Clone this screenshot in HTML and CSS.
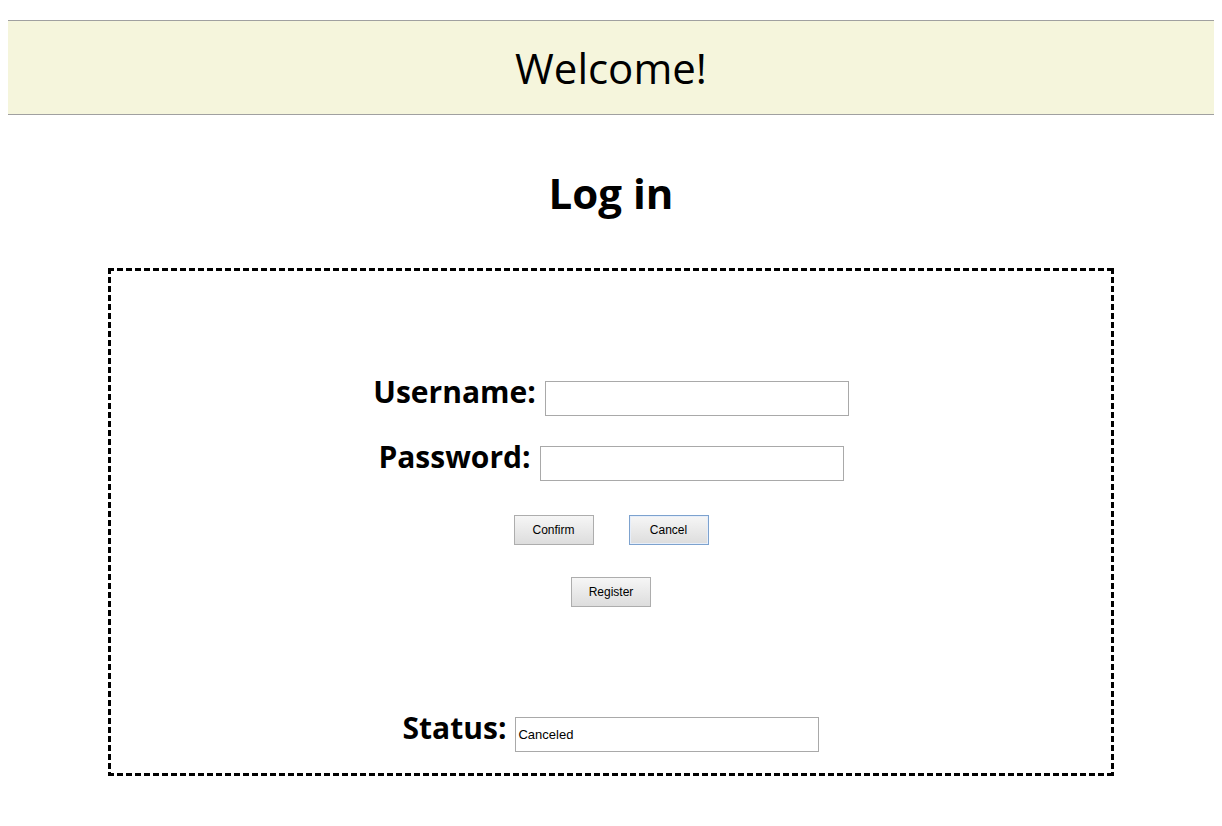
FILE: index.html
```html
<!DOCTYPE html>
<html lang="en">
<head>
<meta charset="utf-8">
<title>Log in</title>
<link rel="stylesheet" href="styles.css">
</head>
<body>
<header class="banner">Welcome!</header>
<h1 class="title">Log in</h1>
<section class="panel">
  <div class="field field-user">
    <label class="label" for="user">Username:</label>
    <input class="text-input" id="user" type="text">
  </div>
  <div class="field field-pass">
    <label class="label" for="pass">Password:</label>
    <input class="text-input" id="pass" type="password">
  </div>
  <div class="actions">
    <button class="btn" type="button">Confirm</button>
    <button class="btn btn-focus" type="button">Cancel</button>
  </div>
  <div class="actions actions-single">
    <button class="btn" type="button">Register</button>
  </div>
  <div class="field field-status">
    <label class="label" for="status">Status:</label>
    <input class="text-input" id="status" type="text" value="Canceled" readonly>
  </div>
</section>
</body>
</html>
```

FILE: styles.css
```css
html, body {
  background: #fff;
}
body {
  margin: 8px;
  font-family: "Open Sans", "Noto Sans", sans-serif;
  color: #000;
}
.banner {
  margin-top: 12px;
  height: 93px;
  box-sizing: content-box;
  border-top: 1px solid #a0a0a0;
  border-bottom: 1px solid #a0a0a0;
  background: #f5f5dc;
  display: flex;
  align-items: center;
  justify-content: center;
  font-size: 42px;
  font-weight: 400;
}
.title {
  margin: 0;
  padding-top: 50px;
  height: 103px;
  box-sizing: border-box;
  text-align: center;
  font-size: 42px;
  line-height: 56px;
  font-weight: 700;
}
.panel {
  margin: 50px 100px 0;
  height: 508px;
  box-sizing: border-box;
  padding: 3px;
  background:
    repeating-linear-gradient(to right, #000 0 6px, transparent 6px 9px) left top / 100% 3px no-repeat,
    repeating-linear-gradient(to right, #000 0 6px, transparent 6px 9px) left bottom / 100% 3px no-repeat,
    repeating-linear-gradient(to bottom, #000 0 6px, transparent 6px 9px) left top / 3px 100% no-repeat,
    repeating-linear-gradient(to bottom, #000 0 6px, transparent 6px 9px) right top / 3px 100% no-repeat,
    #fff;
  display: flex;
  flex-direction: column;
  align-items: center;
}
.field {
  display: flex;
  align-items: baseline;
  justify-content: center;
  gap: 9px;
}
.field-user {
  margin-top: 101px;
}
.field-pass {
  margin-top: 21px;
}
.field-status {
  margin-top: auto;
  margin-bottom: 21px;
}
.label {
  font-size: 30px;
  font-weight: 700;
  line-height: 40px;
}
.text-input {
  width: 304px;
  height: 35px;
  box-sizing: border-box;
  border: 1px solid #a9a9a9;
  padding: 1px 2px;
  font-family: "Liberation Sans", Arial, sans-serif;
  font-size: 13px;
  color: #000;
  background: #fff;
  outline: none;
}
.actions {
  display: flex;
  justify-content: center;
  gap: 35px;
  margin-top: 34px;
}
.actions-single {
  margin-top: 32px;
}
.btn {
  width: 80px;
  height: 30px;
  box-sizing: border-box;
  border: 1px solid #adadad;
  border-radius: 0;
  background: linear-gradient(#f6f6f6, #dddddd);
  font-family: "Liberation Sans", Arial, sans-serif;
  font-size: 12px;
  color: #000;
  padding: 0;
}
.btn-focus {
  border-color: #7da2ce;
  box-shadow: inset 0 0 0 1px #e6eefa;
}
```
